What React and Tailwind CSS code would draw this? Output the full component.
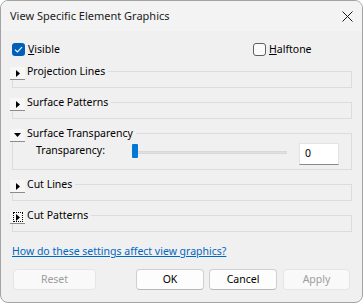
import React from 'react';

const font = { fontFamily: '"Segoe UI", "Noto Sans", sans-serif' };

const Arrow = ({ open }) =>
  open ? (
    <svg width="7" height="4" viewBox="0 0 7 4"><path d="M0 0 L7 0 L3.5 4 Z" fill="#000" /></svg>
  ) : (
    <svg width="4" height="7" viewBox="0 0 4 7"><path d="M0 0 L4 3.5 L0 7 Z" fill="#000" /></svg>
  );

const Group = ({ title, open, focused, children }) => (
  <div className="flex flex-col">
    <div className="relative z-10 flex h-[13px] w-fit items-start -ml-[2px] bg-[#f0f0f0]">
      <div className="flex h-[13px] w-[15px] items-center justify-center bg-[#f7f7f7] border-b border-[#8c8c8c]">
        {focused ? (
          <span className="flex h-[10px] w-[10px] items-center justify-center border border-dotted border-black">
            <Arrow open={open} />
          </span>
        ) : (
          <Arrow open={open} />
        )}
      </div>
      <span className="pl-[2px] pr-[3px] text-[10.5px] leading-[9px] text-black whitespace-nowrap">{title}</span>
    </div>
    <div className={`-mt-[9px] w-[340px] border border-[#dcdcdc] ${open ? 'h-[37px]' : 'h-[17px]'}`}>
      {children}
    </div>
  </div>
);

export default function App() {
  return (
    <div className="w-[364px] h-[304px] bg-white" style={font}>
      <div className="flex h-[303px] w-[363px] flex-col overflow-hidden rounded-[8px] border border-[#a3a3a3] bg-[#f0f0f0]">
        {/* title bar */}
        <div className="flex h-[30px] shrink-0 items-center justify-between bg-[#f3f3f3] pl-[9px] pr-[9px]">
          <span className="text-[11px] text-[#1b1b1b]">View Specific Element Graphics</span>
          <svg width="11" height="11" viewBox="0 0 11 11">
            <path d="M0.5 0.5 L10.5 10.5 M10.5 0.5 L0.5 10.5" stroke="#1b1b1b" strokeWidth="1" />
          </svg>
        </div>

        <div className="flex flex-col pl-[11px] pt-[12px]">
          <div className="flex h-[13px] items-center text-[10.5px] text-black">
            <div className="flex w-[241px] items-center">
              <span className="flex h-[13px] w-[13px] items-center justify-center rounded-[3px] bg-[#005fb8]">
                <svg width="9" height="7" viewBox="0 0 9 7">
                  <path d="M1 3.6 L3.4 6 L8 1.2" stroke="#fff" strokeWidth="1.1" fill="none" />
                </svg>
              </span>
              <span className="ml-[3px]"><span className="underline">V</span>isible</span>
            </div>
            <span className="h-[13px] w-[13px] rounded-[3px] border border-[#5f5f5f] bg-[#fafafa]" />
            <span className="ml-[3px]"><span className="underline">H</span>alftone</span>
          </div>

          <div className="mt-[11px] flex flex-col gap-[10px]">
            <Group title="Projection Lines" />
            <Group title="Surface Patterns" />
            <Group title="Surface Transparency" open>
              <div className="flex h-[22px] items-start pl-[23px] mt-[9px]">
                <span className="w-[96px] text-[10.5px] leading-[14px] text-black">Transparency:</span>
                <div className="relative h-[22px] w-[155px]">
                  <div className="absolute left-0 right-0 top-[8px] h-[3px] bg-[#e0e0e0] border-y border-[#d8d8d8]" />
                  <div className="absolute left-0 top-[1px] h-[14px] w-[6px] rounded-[1px] bg-[#0078d4]" />
                </div>
                <div className="ml-[12px] flex h-[22px] w-[40px] items-center border border-[#e3e3e3] border-b-[#8a8a8a] bg-white pl-[5px] text-[10.5px] text-black">
                  0
                </div>
              </div>
            </Group>
            <Group title="Cut Lines" />
            <Group title="Cut Patterns" focused />
          </div>

          <a className="mt-[11px] w-fit text-[10.5px] leading-[16px] text-[#0067c0] underline" href="#">
            How do these settings affect view graphics?
          </a>

          <div className="mt-[10px] flex items-center text-[10.5px]">
            <button className="ml-[1px] h-[21px] w-[83px] rounded-[4px] border border-[#e5e5e5] bg-[#f9f9f9] text-[#9d9d9d]">Reset</button>
            <button className="ml-[40px] h-[21px] w-[68px] rounded-[4px] border border-[#d0d0d0] border-b-[#b8b8b8] bg-[#fdfdfd] text-black">OK</button>
            <button className="ml-[5px] h-[21px] w-[68px] rounded-[4px] border border-[#d0d0d0] border-b-[#b8b8b8] bg-[#fdfdfd] text-black">Cancel</button>
            <button className="ml-[6px] h-[21px] w-[67px] rounded-[4px] border border-[#e5e5e5] bg-[#f9f9f9] text-[#9d9d9d]">Apply</button>
          </div>
        </div>
      </div>
    </div>
  );
}
